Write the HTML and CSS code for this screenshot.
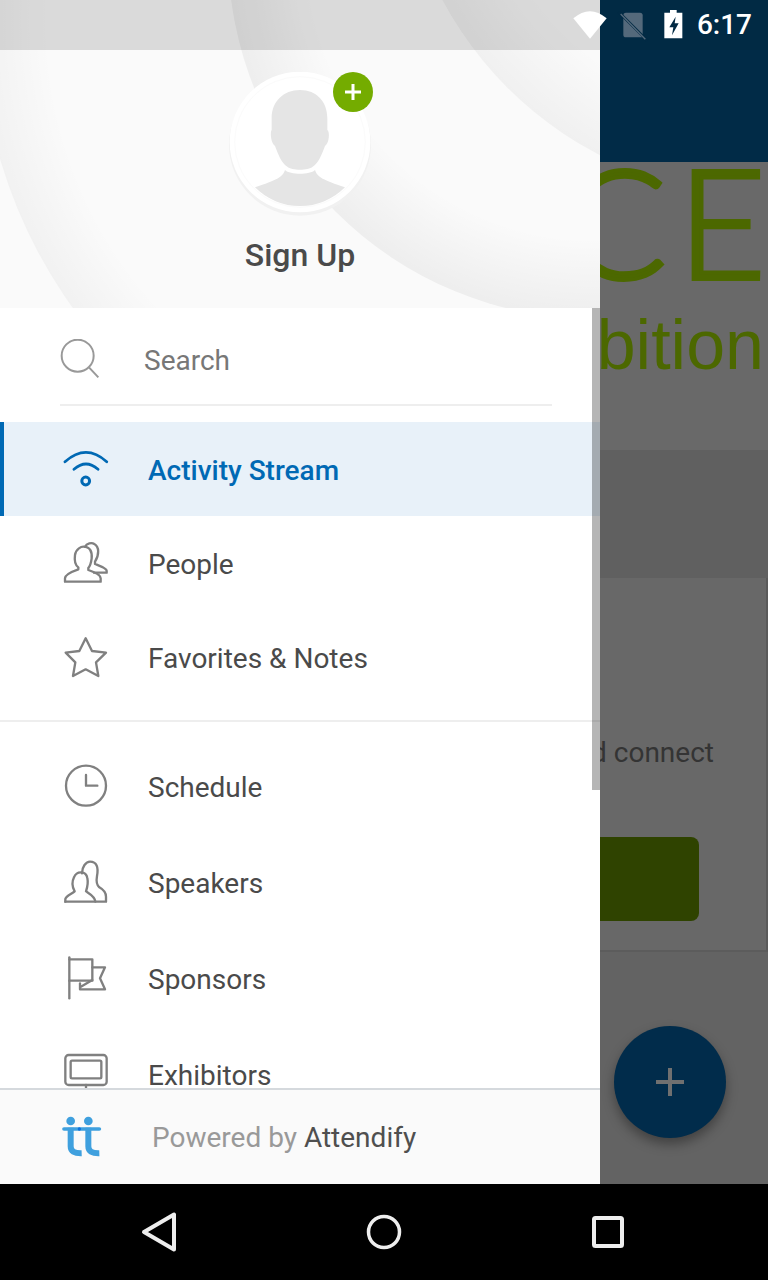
FILE: index.html
```html
<!DOCTYPE html>
<html lang="en">
<head>
<meta charset="utf-8">
<title>Attendify</title>
<link rel="stylesheet" href="styles.css">
</head>
<body>
<div class="screen">
  <div class="main">
    <div class="backdrop">
      <div class="appbar"><div class="appbar-status"></div></div>
      <div class="hero">
        <div class="hero-title">ACE</div>
        <div class="hero-sub">Exhibition</div>
      </div>
      <div class="band"></div>
      <div class="card">
        <p class="card-text">Explore and connect</p>
        <div class="card-btn"></div>
      </div>
      <div class="rest"></div>
    </div>
    <div class="fab"><span class="fab-h"></span><span class="fab-v"></span></div>

    <aside class="drawer">
      <header class="drawer-head">
        <svg class="arcs" viewBox="0 0 600 308" aria-hidden="true">
          <defs>
            <radialGradient id="g1" gradientUnits="userSpaceOnUse" cx="473" cy="20" r="493">
              <stop offset="0.86" stop-color="#000" stop-opacity="0"/>
              <stop offset="1" stop-color="#000" stop-opacity="0.035"/>
            </radialGradient>
            <radialGradient id="g2" gradientUnits="userSpaceOnUse" cx="595" cy="-48" r="367">
              <stop offset="0.78" stop-color="#000" stop-opacity="0"/>
              <stop offset="1" stop-color="#000" stop-opacity="0.05"/>
            </radialGradient>
            <radialGradient id="g3" gradientUnits="userSpaceOnUse" cx="769" cy="-174" r="370">
              <stop offset="0.78" stop-color="#000" stop-opacity="0"/>
              <stop offset="1" stop-color="#000" stop-opacity="0.04"/>
            </radialGradient>
          </defs>
          <circle cx="473" cy="20" r="493" fill="url(#g1)"/>
          <circle cx="595" cy="-48" r="367" fill="url(#g2)"/>
          <circle cx="769" cy="-174" r="370" fill="#fafafa"/>
          <circle cx="769" cy="-174" r="370" fill="url(#g3)"/>
        </svg>
        <div class="head-tint"></div>
        <div class="profile">
          <div class="avatar">
            <svg class="avatar-img" viewBox="57 36 426 438" aria-hidden="true">
              <circle cx="270" cy="254" r="213" fill="#f1f1f1"/>
              <circle cx="270" cy="246" r="211" fill="#fff"/>
              <circle cx="270" cy="246" r="196" fill="none" stroke="#fbfbfb" stroke-width="3"/>
              <path fill="#e5e5e5" d="M270 90C220 90 185 125 185 175L185 210C180 215 182 250 195 258C205 285 215 310 232 320C245 332 295 332 308 320C325 310 335 285 345 258C358 250 360 215 352 210L352 175C352 125 320 90 270 90Z"/>
              <path fill="#e5e5e5" d="M225 330C240 345 300 345 315 330C322 352 340 360 405 382A190 190 0 0 1 135 382C200 360 218 352 225 330Z"/>
            </svg>
            <span class="badge"><svg viewBox="0 0 40 40" aria-hidden="true"><path d="M20 12V28M12 20H28" stroke="#fff" stroke-width="3" fill="none"/></svg></span>
          </div>
          <div class="signup">Sign Up</div>
        </div>
      </header>

      <div class="drawer-body">
        <div class="search">
          <svg class="search-icon" viewBox="60 30 120 120" aria-hidden="true"><circle cx="113" cy="80" r="48" fill="none" stroke="#999" stroke-width="6"/><path d="M147 115L175 145" stroke="#999" stroke-width="6" fill="none"/></svg>
          <span class="search-text">Search</span>
        </div>

        <nav class="group first">
          <a class="item tall active">
            <svg class="ico" viewBox="0 0 48 48" aria-hidden="true"><path d="M3 16.7Q24 -2 44.7 16.7M12 24.3Q24 13.7 36 24.3" fill="none" stroke="#0069b4" stroke-width="2.800" stroke-linecap="round"/><circle cx="23.700" cy="36" r="3.900" fill="none" stroke="#0069b4" stroke-width="3"/></svg>
            <span>Activity Stream</span>
          </a>
          <a class="item tall">
            <svg class="ico line" viewBox="66 627 144 144" aria-hidden="true"><path d="M75 755V745C75 735 95 725 115 718V712C105 705 103 690 105 675C108 655 125 650 130 650C150 650 157 665 155 685C153 700 150 708 145 714V720C160 725 182 735 182 745V755Z"/><path d="M135 650C140 640 155 637 163 642C178 650 178 675 165 695V702C180 708 200 715 200 722V728H162"/></svg>
            <span>People</span>
          </a>
          <a class="item tall">
            <svg class="ico line" viewBox="66 909 144 144" aria-hidden="true"><path d="M137 925L156 963L198 968L168 997L175 1038L137 1018L99 1038L106 997L77 968L118 963Z"/></svg>
            <span>Favorites &amp; Notes</span>
          </a>
        </nav>

        <nav class="group second">
          <a class="item">
            <svg class="ico line" viewBox="66 39 144 144" aria-hidden="true"><circle cx="138" cy="107" r="60"/><path d="M138 75V107H172"/></svg>
            <span>Schedule</span>
          </a>
          <a class="item">
            <svg class="ico line" viewBox="66 327 144 144" aria-hidden="true"><path d="M76 455V447C78 438 95 432 104 424C96 410 96 394 102 382C110 362 138 362 142 384C145 398 142 412 138 424C150 432 165 440 166 455"/><path d="M126 370C126 350 138 335 150 335C170 335 176 352 171 378C168 395 170 405 178 412C192 420 198 428 198 440V455H76"/></svg>
            <span>Speakers</span>
          </a>
          <a class="item">
            <svg class="ico line" viewBox="66 615 144 144" aria-hidden="true"><path d="M88 622V745"/><path d="M88 628H157V692H88"/><path d="M157 652H195L180 685L195 718H120V700M120 712L157 690"/></svg>
            <span>Sponsors</span>
          </a>
          <a class="item">
            <svg class="ico line" viewBox="66 903 144 144" aria-hidden="true"><rect x="76" y="915" width="124" height="90" rx="10"/><rect x="92" y="932" width="92" height="53" rx="4"/><path d="M138 1005V1015"/></svg>
            <span>Exhibitors</span>
          </a>
        </nav>
      </div>

      <div class="scrollbar"></div>

      <footer class="powered">
        <svg class="logo" viewBox="66 1086 144 144" aria-hidden="true">
          <circle cx="92" cy="1110" r="13" fill="#3fa0de"/><circle cx="145" cy="1110" r="13" fill="#3fa0de"/>
          <path d="M72 1134H178" stroke="#3fa0de" stroke-width="11" fill="none" stroke-linecap="round"/>
          <path d="M92 1130V1186Q92 1208 125 1207M145 1130V1186Q145 1208 178 1207" stroke="#3fa0de" stroke-width="18" fill="none"/>
          <circle cx="118" cy="1134" r="5" fill="#0a70dd"/>
        </svg>
        <span class="powered-text">Powered by <b>Attendify</b></span>
      </footer>
    </aside>

    <div class="status">
      <svg class="status-icons" viewBox="36 0 372 150" aria-hidden="true">
        <path fill="#fff" d="M40 55Q90 12 140 55L90 116Z"/>
        <path fill="#54697b" d="M190 46Q190 38 198 38H240Q248 38 248 46V112H198Q190 112 190 104Z"/>
        <path stroke="#022a44" stroke-width="8" d="M176 36L262 122" fill="none"/>
        <path stroke="#54697b" stroke-width="4" d="M182 42L256 118" fill="none"/>
        <path fill="#fff" d="M330 30H350V38H367V115H313V38H330Z"/>
        <path fill="#022a44" d="M347 50L328 82H340L336 106L356 70H344Z"/>
      </svg>
      <span class="clock">6:17</span>
    </div>
  </div>

  <div class="navbar">
    <svg class="nav-ico" viewBox="0 0 48 48" aria-hidden="true"><path d="M8 24L38 6.500V41.500Z" fill="none" stroke="#eee" stroke-width="4" stroke-linejoin="round"/></svg>
    <svg class="nav-ico" viewBox="0 0 48 48" aria-hidden="true"><circle cx="24" cy="24" r="15.500" fill="none" stroke="#eee" stroke-width="3.500"/></svg>
    <svg class="nav-ico" viewBox="0 0 48 48" aria-hidden="true"><rect x="10" y="10" width="28" height="28" rx="1.500" fill="none" stroke="#eee" stroke-width="4"/></svg>
  </div>
</div>
</body>
</html>
```
FILE: styles.css
```css
* { box-sizing: border-box; }
html, body { margin: 0; padding: 0; }
body { width: 768px; height: 1280px; overflow: hidden; background: #000; font-family: Roboto, "Liberation Sans", sans-serif; }
.screen { width: 768px; height: 1280px; display: flex; flex-direction: column; }
.main { position: relative; height: 1184px; overflow: hidden; }

.backdrop { height: 100%; display: flex; flex-direction: column; background: #636363; }
.appbar { height: 162px; background: #012b47; flex: none; }
.appbar-status { height: 50px; background: #012a44; }
.hero { height: 288px; flex: none; background: #696969; text-align: right; overflow: hidden; color: #4c6800; white-space: nowrap; }
.hero-title { font-family: Lato, sans-serif; font-weight: 300; font-size: 152px; line-height: 160px; letter-spacing: 11px; margin-right: -9px; margin-top: -22px; -webkit-text-stroke: 4px #4c6800; }
.hero-sub { font-family: "Liberation Sans", sans-serif; font-size: 70px; line-height: 72px; padding-right: 4px; margin-top: 9px; }
.band { height: 128px; flex: none; background: #606060; }
.card { height: 374px; flex: none; background: #686868; border-right: 2px solid #5a5a5a; border-bottom: 2px solid #5c5c5c; display: flex; flex-direction: column; align-items: flex-end; }
.card-text { margin: 158px 52px 0 0; font-size: 28px; line-height: 34px; color: #343434; white-space: nowrap; }
.card-btn { width: 300px; height: 84px; margin: 67px 67px 0 0; background: #2f4300; border-radius: 8px; }
.rest { flex: 1; }

.fab { position: absolute; left: 614px; top: 1026px; width: 112px; height: 112px; border-radius: 50%; background: #012c4b; box-shadow: 0 6px 12px rgba(0,0,0,.35); }
.fab-h { position: absolute; left: 42px; top: 54px; width: 28px; height: 4px; background: #707070; }
.fab-v { position: absolute; left: 54px; top: 42px; width: 4px; height: 28px; background: #707070; }

.drawer { position: absolute; left: 0; top: 0; width: 600px; height: 1184px; background: #fff; display: flex; flex-direction: column; }
.drawer-head { position: relative; height: 308px; flex: none; background: #fafafa; overflow: hidden; }
.arcs { position: absolute; left: 0; top: 0; width: 600px; height: 308px; }
.head-tint { position: relative; height: 50px; background: rgba(0,0,0,.125); }
.profile { position: relative; display: flex; flex-direction: column; align-items: center; padding-top: 22px; }
.avatar { position: relative; width: 142px; height: 146px; }
.avatar-img { display: block; width: 142px; height: 146px; }
.badge { position: absolute; left: 104px; top: 0; width: 40px; height: 40px; border-radius: 50%; background: #74ac00; }
.badge svg { display: block; width: 40px; height: 40px; }
.signup { margin-top: 18px; font-size: 32px; line-height: 38px; font-weight: 500; color: #4a4a4a; }

.drawer-body { flex: 1; min-height: 0; overflow: hidden; }
.search { height: 98px; margin: 0 48px 0 60px; display: flex; align-items: center; border-bottom: 2px solid #eee; padding-top: 8px; }
.search-icon { width: 40px; height: 40px; flex: none; margin-top: -2px; }
.search-text { margin-left: 44px; font-size: 28px; color: #777; }

.group.first { margin-top: 16px; padding-bottom: 16px; border-bottom: 2px solid #eee; }
.group.second { padding-top: 17px; }
.item { display: flex; align-items: center; height: 96px; padding-left: 62px; font-size: 28px; color: #4a4a4a; }
.item.tall { height: 94px; }
.item.tall span { margin-top: 2px; }
.item.active { background: #e8f1f9; border-left: 4px solid #0069b4; padding-left: 58px; color: #0069b4; font-weight: 500; }
.ico { width: 48px; height: 48px; flex: none; margin-right: 38px; overflow: hidden; }
.ico.line { fill: none; stroke: #808080; stroke-width: 7; stroke-linejoin: round; stroke-linecap: round; }

.scrollbar { position: absolute; left: 592px; top: 308px; width: 8px; height: 482px; background: rgba(0,0,0,.29); }

.powered { height: 96px; flex: none; background: #fafafa; border-top: 2px solid #d5d9dd; display: flex; align-items: center; padding-left: 62px; }
.logo { width: 48px; height: 48px; flex: none; }
.powered-text { margin-left: 42px; font-size: 28px; color: #999; }
.powered-text b { font-weight: 400; color: #4f4f4f; }

.status { position: absolute; left: 0; top: 0; width: 100%; height: 50px; display: flex; justify-content: flex-end; align-items: center; padding-right: 16px; }
.status-icons { width: 124px; height: 50px; flex: none; }
.clock { margin-left: 1px; font-size: 28px; font-weight: 500; color: #fff; line-height: 50px; }

.navbar { height: 96px; flex: none; background: #000; display: grid; grid-template-columns: repeat(3, 224px); justify-content: center; justify-items: center; align-items: center; }
.nav-ico { width: 48px; height: 48px; display: block; }
```
